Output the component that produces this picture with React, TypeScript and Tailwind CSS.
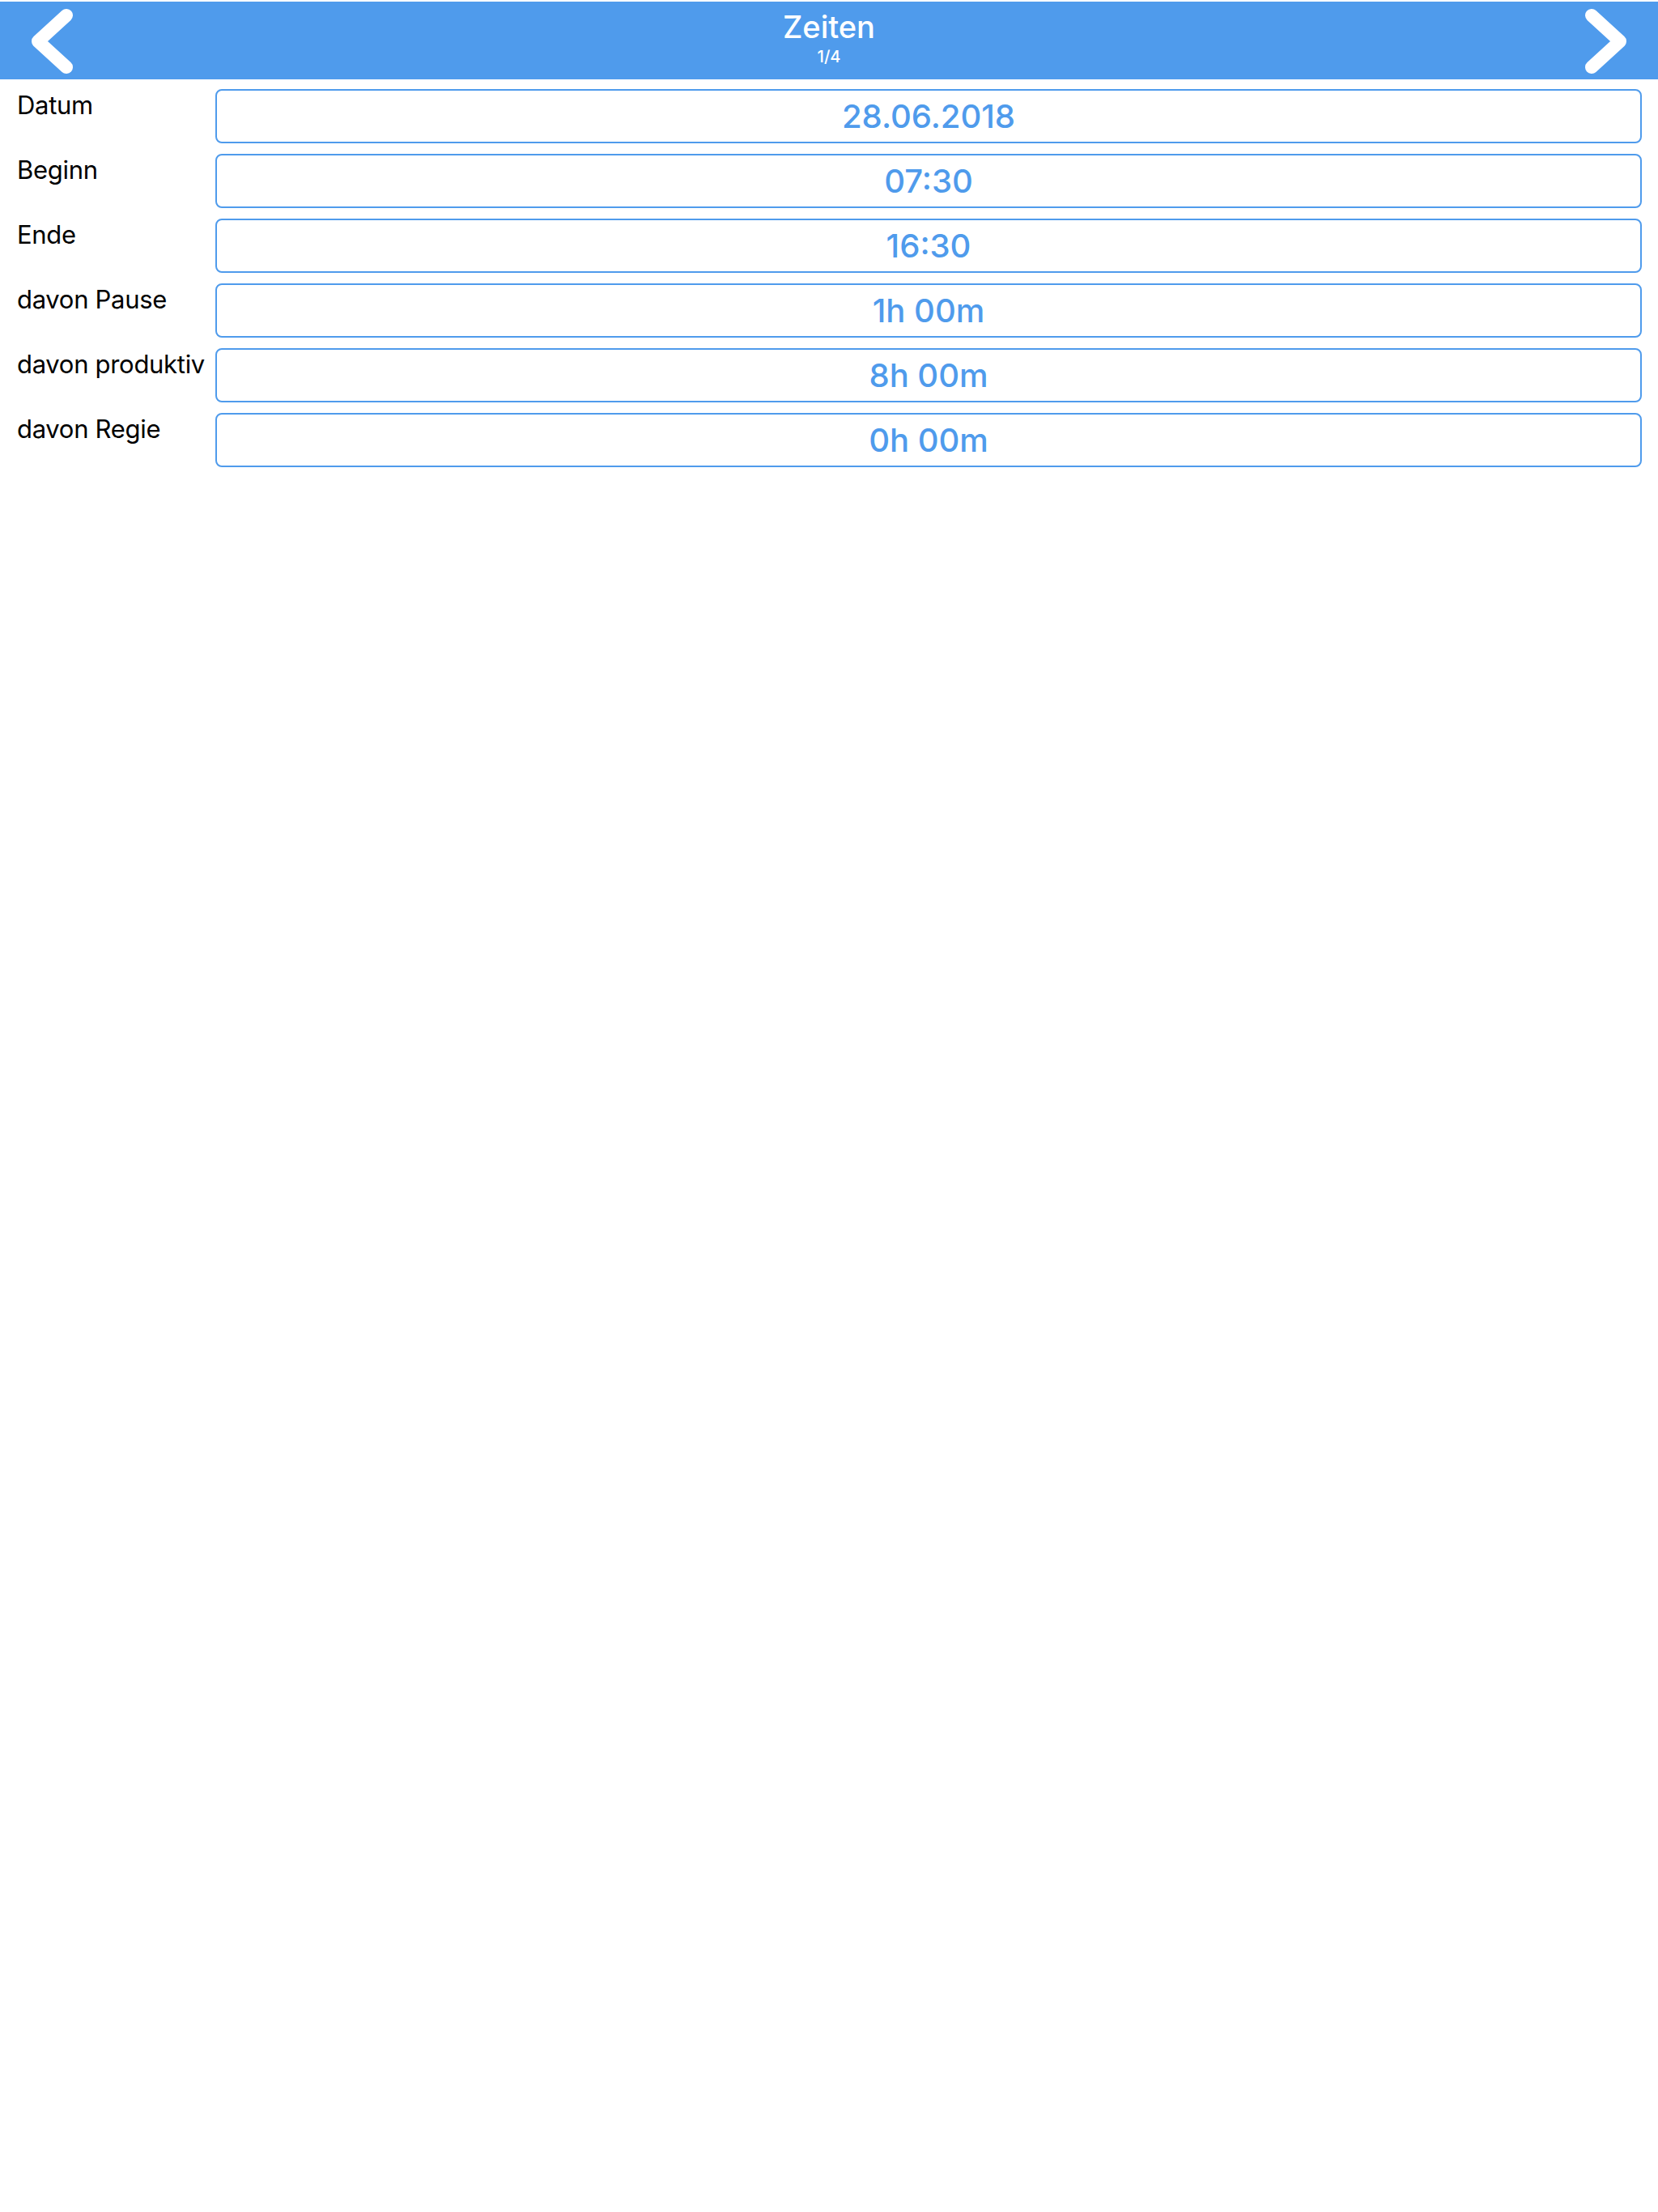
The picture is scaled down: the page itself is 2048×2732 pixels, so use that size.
import React from "react";

const rows: { label: string; value: string }[] = [
  { label: "Datum", value: "28.06.2018" },
  { label: "Beginn", value: "07:30" },
  { label: "Ende", value: "16:30" },
  { label: "davon Pause", value: "1h 00m" },
  { label: "davon produktiv", value: "8h 00m" },
  { label: "davon Regie", value: "0h 00m" },
];

function Chevron({ dir }: { dir: "left" | "right" }) {
  const d = dir === "left" ? "M43 8 L8 40 L43 72" : "M8 8 L43 40 L8 72";
  return (
    <svg width="51" height="80" viewBox="0 0 51 80" className="block">
      <path
        d={d}
        fill="none"
        stroke="#ffffff"
        strokeWidth="16"
        strokeLinecap="round"
        strokeLinejoin="round"
      />
    </svg>
  );
}

export default function App() {
  return (
    <div
      className="min-h-[2732px] w-full bg-white pt-[2px]"
      style={{ fontFamily: "Inter, 'Noto Sans', sans-serif" }}
    >
      <header className="flex h-[96px] items-start justify-between bg-[#4f9bec] px-[39px]">
        <button className="mt-[9px]" aria-label="Zurück">
          <Chevron dir="left" />
        </button>
        <div className="flex flex-col items-center pt-[12px] text-white">
          <span className="text-[38px] font-medium leading-none">Zeiten</span>
          <span className="mt-[8px] text-[20px] font-medium leading-none">1/4</span>
        </div>
        <button className="mt-[9px]" aria-label="Weiter">
          <Chevron dir="right" />
        </button>
      </header>

      <div className="flex flex-col gap-[13px] pl-[21px] pr-[20px] pt-[12px]">
        {rows.map((r) => (
          <div key={r.label} className="grid h-[67px] grid-cols-[245px_1fr]">
            <div className="whitespace-nowrap pt-[4px] text-[31px] leading-none tracking-[-0.3px] text-black">
              {r.label}
            </div>
            <div className="flex items-center justify-center rounded-[8px] border-2 border-[#4f9bec] text-[40px] font-medium leading-none text-[#4f9bec]">
              {r.value}
            </div>
          </div>
        ))}
      </div>
    </div>
  );
}
